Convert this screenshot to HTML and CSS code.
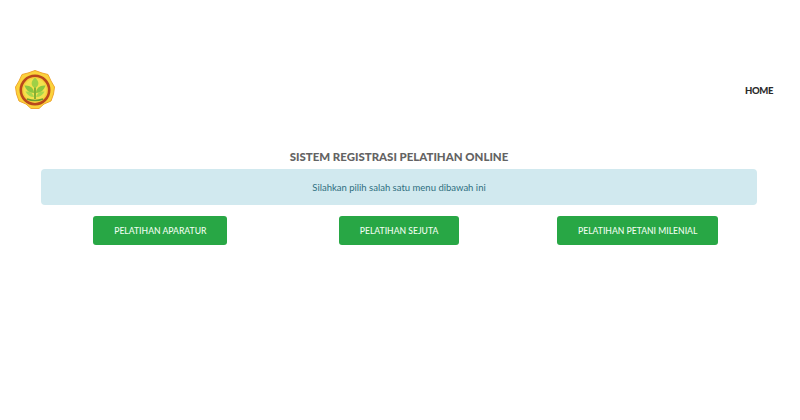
FILE: index.html
```html
<!DOCTYPE html>
<html lang="id">
<head>
<meta charset="utf-8">
<title>Sistem Registrasi Pelatihan Online</title>
<link rel="stylesheet" href="styles.css">
</head>
<body>
<header class="navbar">
  <svg class="logo" viewBox="0 0 40 40" aria-label="Logo">
    <polygon points="20,0.5 27,3 33,4.5 36,11 39.5,17 38.5,24 36,31 29,34 24,38.5 16,38.5 11,34 4,31 1.5,24 0.5,17 4,11 7,4.5 13,3" fill="#fbd33a" stroke="#f0a630" stroke-width="1"/>
    <circle cx="20" cy="20" r="14.2" fill="#f6cf3a" stroke="#b9481c" stroke-width="2.6"/>
    <circle cx="20" cy="20" r="11.4" fill="#f3e14e"/>
    <path d="M20 29V17" stroke="#6aa32e" stroke-width="1.6" fill="none"/>
    <path d="M20 18C16 16 15 12 20 7.5C25 12 24 16 20 18Z" fill="#9fd046"/>
    <path d="M19 23C14 23 11 20 9.5 15.5C15 15 19 18 19 23Z" fill="#8cc63f"/>
    <path d="M21 23C26 23 29 20 30.5 15.5C25 15 21 18 21 23Z" fill="#8cc63f"/>
    <path d="M19 27C15 27 12 25 10.5 21.5C15 21 18 23 19 27Z" fill="#a6d64c"/>
    <path d="M21 27C25 27 28 25 29.5 21.5C25 21 22 23 21 27Z" fill="#a6d64c"/>
    <path d="M12 29Q20 32 28 29" stroke="#6a9c2e" stroke-width="1.4" fill="none"/>
  </svg>
  <a class="nav-link" href="#">HOME</a>
</header>
<main class="content">
  <h1 class="title">SISTEM REGISTRASI PELATIHAN ONLINE</h1>
  <div class="alert">Silahkan pilih salah satu menu dibawah ini</div>
  <div class="menu">
    <div class="menu-col"><a class="btn" href="#">PELATIHAN APARATUR</a></div>
    <div class="menu-col"><a class="btn" href="#">PELATIHAN SEJUTA</a></div>
    <div class="menu-col"><a class="btn" href="#">PELATIHAN PETANI MILENIAL</a></div>
  </div>
</main>
</body>
</html>
```
FILE: styles.css
```css
* { box-sizing: border-box; }
html, body { margin: 0; height: 100%; background: #fff; overflow: hidden; }
body { font-family: Lato, "Noto Sans", sans-serif; color: #212529; }
.navbar {
  display: flex;
  justify-content: space-between;
  align-items: center;
  padding: 70px 27px 0 15px;
}
.logo { width: 40px; height: 40px; display: block; }
.nav-link {
  font-size: 9.5px;
  font-weight: 900;
  letter-spacing: -0.4px;
  color: #2b2b2b;
  text-decoration: none;
}
.content {
  width: 716px;
  margin: 40px auto 0 41px;
  display: flex;
  flex-direction: column;
}
.title {
  margin: 0;
  height: 19px;
  line-height: 14px;
  text-align: center;
  font-size: 11.45px;
  font-weight: 900;
  color: #636363;
}
.alert {
  height: 36px;
  background: #d1e9ef;
  border-radius: 4px;
  color: #2f6f80;
  font-size: 9.5px;
  display: flex;
  align-items: center;
  justify-content: center;
}
.menu {
  display: grid;
  grid-template-columns: repeat(3, 1fr);
  margin-top: 11px;
}
.menu-col { display: flex; justify-content: center; }
.btn {
  height: 29px;
  padding: 0 21px;
  display: flex;
  align-items: center;
  background: #28a745;
  border-radius: 3px;
  color: #f0fdf0;
  font-size: 8.6px;
  font-weight: 500;
  text-decoration: none;
  white-space: nowrap;
}
```
